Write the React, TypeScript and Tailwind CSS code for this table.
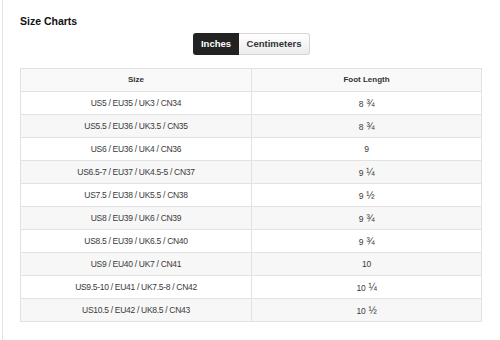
import React, { useState } from 'react';

const rows: [string, string, string][] = [
  ['US5 / EU35 / UK3 / CN34', '8', '¾'],
  ['US5.5 / EU36 / UK3.5 / CN35', '8', '¾'],
  ['US6 / EU36 / UK4 / CN36', '9', ''],
  ['US6.5-7 / EU37 / UK4.5-5 / CN37', '9', '¼'],
  ['US7.5 / EU38 / UK5.5 / CN38', '9', '½'],
  ['US8 / EU39 / UK6 / CN39', '9', '¾'],
  ['US8.5 / EU39 / UK6.5 / CN40', '9', '¾'],
  ['US9 / EU40 / UK7 / CN41', '10', ''],
  ['US9.5-10 / EU41 / UK7.5-8 / CN42', '10', '¼'],
  ['US10.5 / EU42 / UK8.5 / CN43', '10', '½'],
];

export default function App() {
  const [unit, setUnit] = useState<'in' | 'cm'>('in');

  return (
    <div className="w-[500px] h-[340px] bg-white overflow-hidden font-['Liberation_Sans',Arial,sans-serif]">
      <div className="ml-[2px] h-full border-l border-[#e3e3e3] pl-[17px] pr-[17px] pt-[15px]">
        <h2 className="text-[10.5px] leading-[12px] font-bold text-[#111]">Size Charts</h2>

        <div className="mt-[6px] flex justify-center">
          <div className="flex h-[22px] rounded-[3px]">
            <button
              onClick={() => setUnit('in')}
              className={`w-[46px] h-full rounded-l-[3px] text-[9.5px] font-bold ${
                unit === 'in' ? 'bg-[#222] text-white' : 'bg-gradient-to-b from-white to-[#ececec] text-[#333] border border-[#d0d0d0]'
              }`}
            >
              Inches
            </button>
            <button
              onClick={() => setUnit('cm')}
              className={`w-[71px] h-full rounded-r-[3px] text-[9.5px] font-bold ${
                unit === 'cm' ? 'bg-[#222] text-white' : 'bg-gradient-to-b from-white to-[#ececec] text-[#333] border border-l-0 border-[#d6d6d6]'
              }`}
            >
              Centimeters
            </button>
          </div>
        </div>

        <table className="mt-[13px] w-[462px] table-fixed border-collapse text-[8.5px] tracking-[-0.3px]">
          <colgroup>
            <col className="w-[231px]" />
            <col />
          </colgroup>
          <thead>
            <tr className="h-[23px] bg-[#f9f9f9]">
              <th className="border border-[#e2e2e2] font-bold text-[#333] tracking-normal text-[8px]">Size</th>
              <th className="border border-[#e2e2e2] font-bold text-[#333] tracking-normal text-[8px]">Foot Length</th>
            </tr>
          </thead>
          <tbody>
            {rows.map(([size, whole, frac], i) => (
              <tr key={size} className={`h-[23px] ${i % 2 === 1 ? 'bg-[#f7f7f7]' : 'bg-white'}`}>
                <td className="border border-[#e2e2e2] text-center text-[#3a3a3a]">{size}</td>
                <td className="border border-[#e2e2e2] text-center text-[#3a3a3a]">
                  {whole}
                  {frac && <span className="ml-[3px] text-[10px]">{frac}</span>}
                </td>
              </tr>
            ))}
          </tbody>
        </table>
      </div>
    </div>
  );
}
